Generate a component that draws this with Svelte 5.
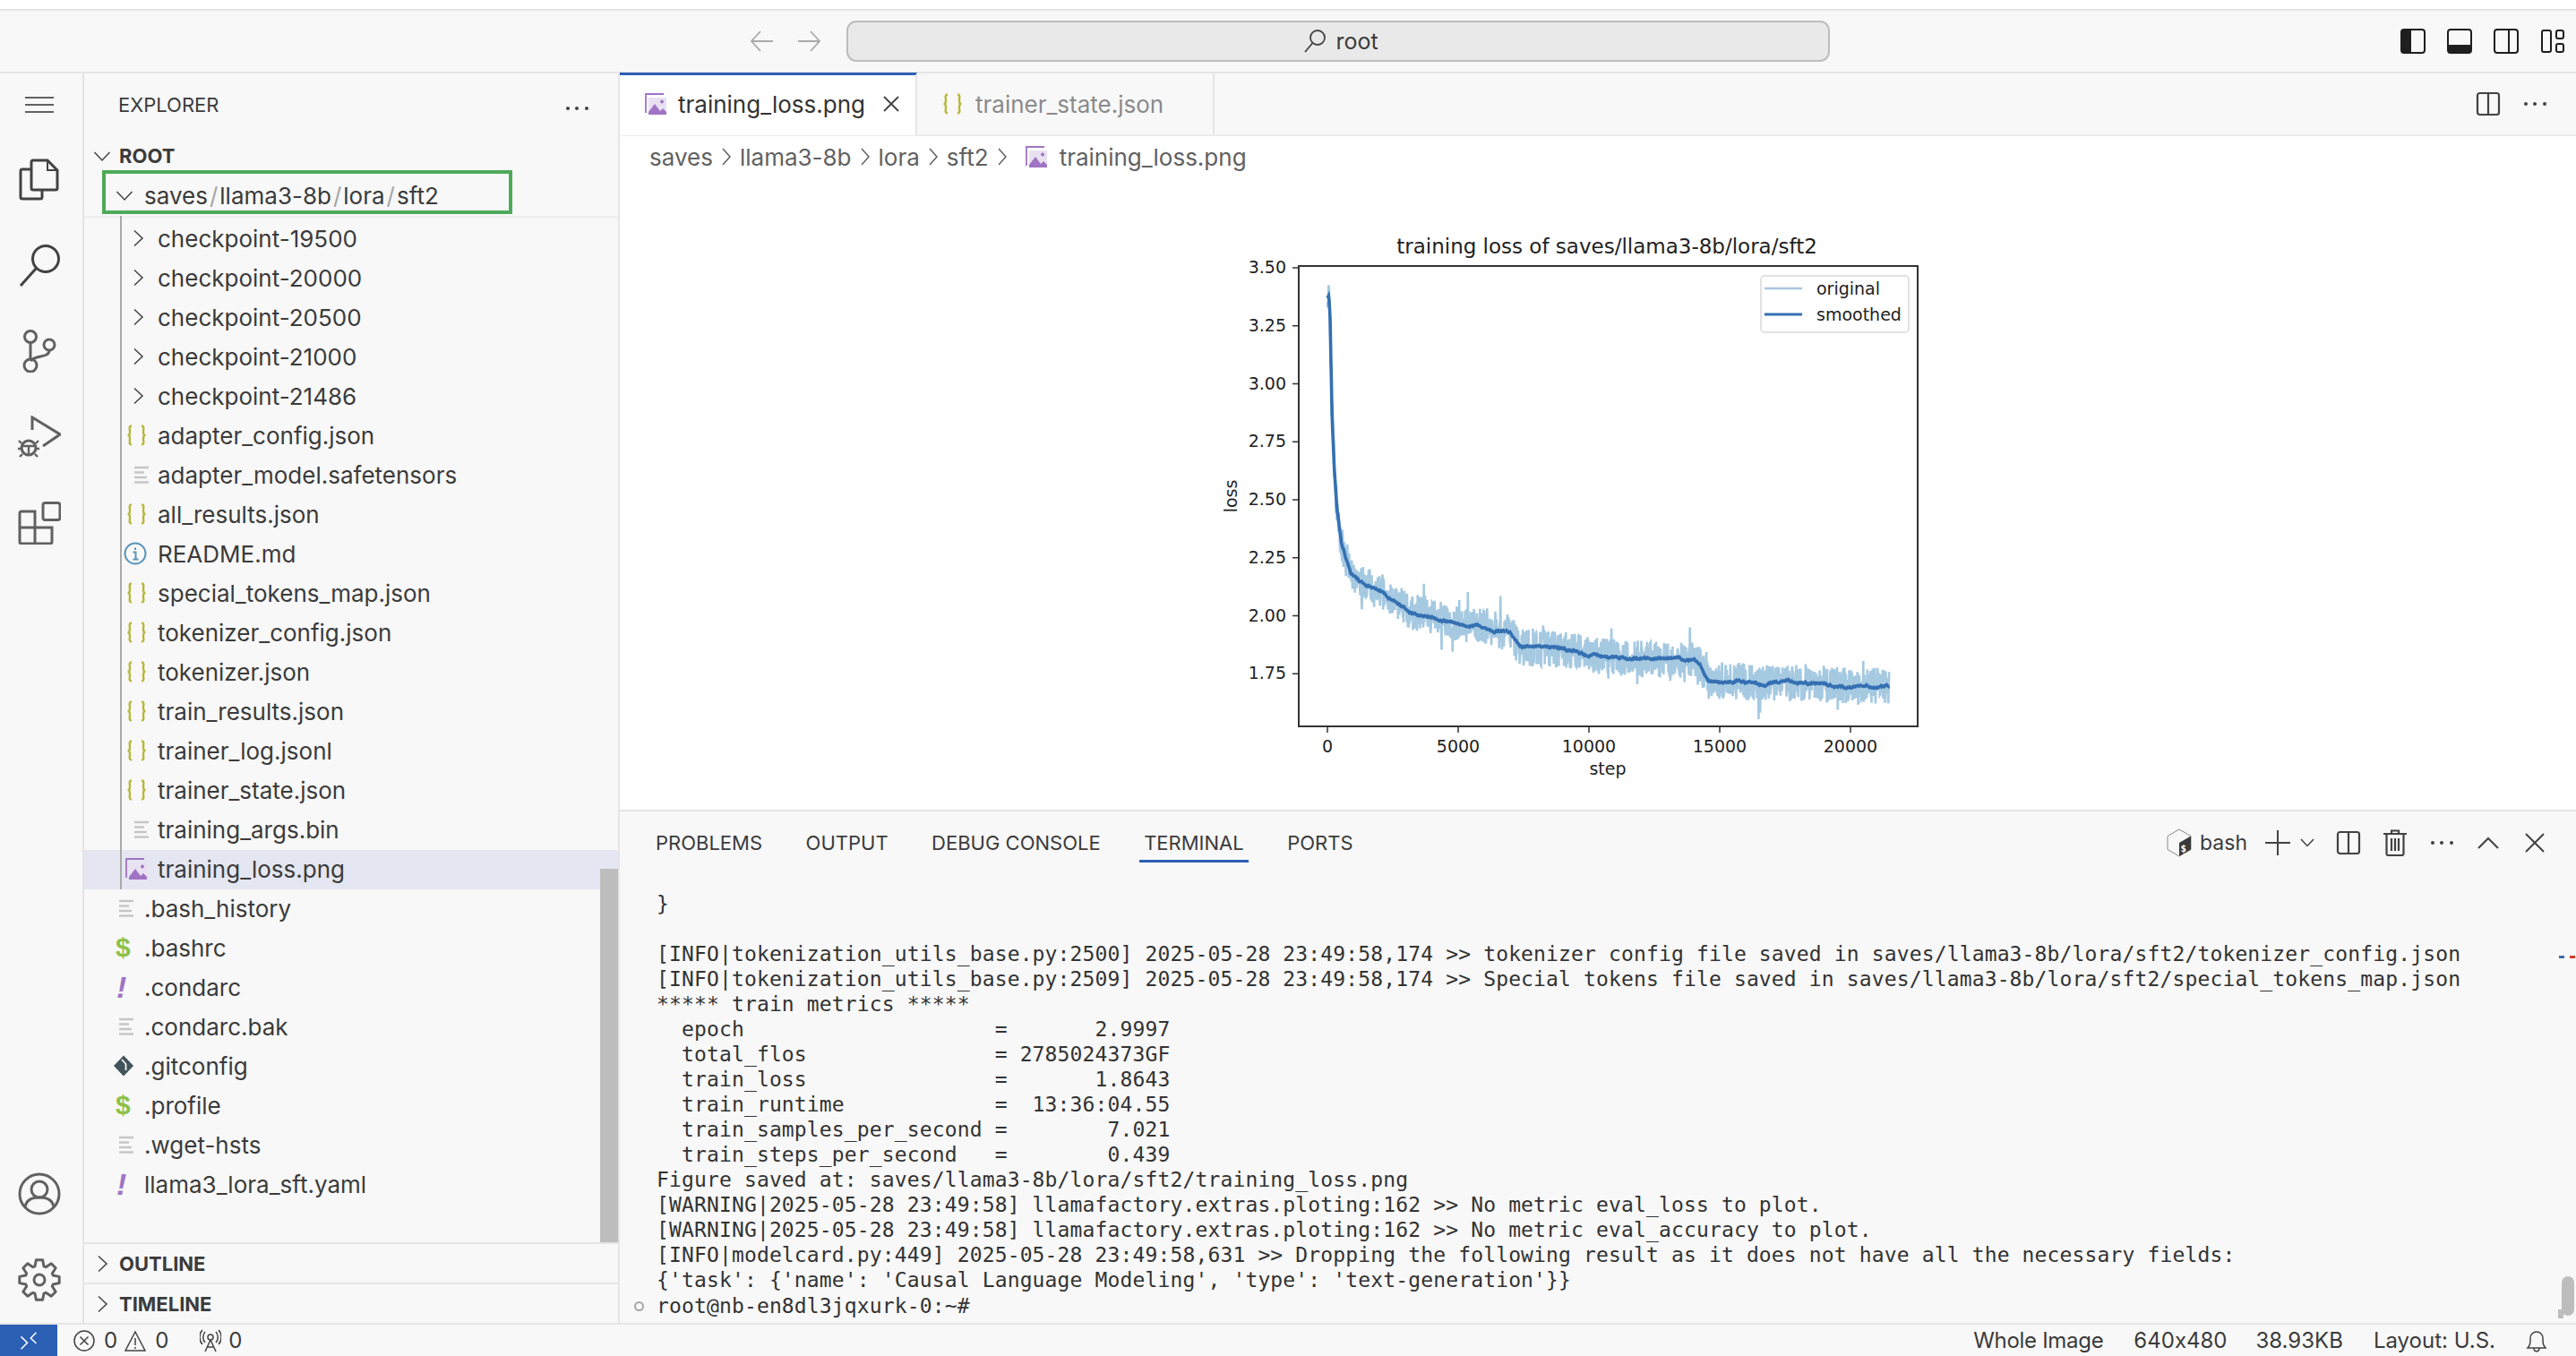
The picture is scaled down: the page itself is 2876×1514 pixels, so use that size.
<script lang="ts">
  const checkpoints = ['checkpoint-19500', 'checkpoint-20000', 'checkpoint-20500', 'checkpoint-21000', 'checkpoint-21486']
  const nestedFiles = [
    { name: 'adapter_config.json', kind: 'json' },
    { name: 'adapter_model.safetensors', kind: 'lines' },
    { name: 'all_results.json', kind: 'json' },
    { name: 'README.md', kind: 'info' },
    { name: 'special_tokens_map.json', kind: 'json' },
    { name: 'tokenizer_config.json', kind: 'json' },
    { name: 'tokenizer.json', kind: 'json' },
    { name: 'train_results.json', kind: 'json' },
    { name: 'trainer_log.jsonl', kind: 'json' },
    { name: 'trainer_state.json', kind: 'json' },
    { name: 'training_args.bin', kind: 'lines' },
    { name: 'training_loss.png', kind: 'image', selected: true },
  ]
  const rootFiles = [
    { name: '.bash_history', kind: 'lines' },
    { name: '.bashrc', kind: 'shell' },
    { name: '.condarc', kind: 'yaml' },
    { name: '.condarc.bak', kind: 'lines' },
    { name: '.gitconfig', kind: 'git' },
    { name: '.profile', kind: 'shell' },
    { name: '.wget-hsts', kind: 'lines' },
    { name: 'llama3_lora_sft.yaml', kind: 'yaml' },
  ]
  const panelTabs = ['PROBLEMS', 'OUTPUT', 'DEBUG CONSOLE', 'TERMINAL', 'PORTS']
  const terminalLines = [
    '}',
    '',
    '[INFO|tokenization_utils_base.py:2500] 2025-05-28 23:49:58,174 >> tokenizer config file saved in saves/llama3-8b/lora/sft2/tokenizer_config.json',
    '[INFO|tokenization_utils_base.py:2509] 2025-05-28 23:49:58,174 >> Special tokens file saved in saves/llama3-8b/lora/sft2/special_tokens_map.json',
    '***** train metrics *****',
    '  epoch                    =       2.9997',
    '  total_flos               = 2785024373GF',
    '  train_loss               =       1.8643',
    '  train_runtime            =  13:36:04.55',
    '  train_samples_per_second =        7.021',
    '  train_steps_per_second   =        0.439',
    'Figure saved at: saves/llama3-8b/lora/sft2/training_loss.png',
    '[WARNING|2025-05-28 23:49:58] llamafactory.extras.ploting:162 >> No metric eval_loss to plot.',
    '[WARNING|2025-05-28 23:49:58] llamafactory.extras.ploting:162 >> No metric eval_accuracy to plot.',
    "[INFO|modelcard.py:449] 2025-05-28 23:49:58,631 >> Dropping the following result as it does not have all the necessary fields:",
    "{'task': {'name': 'Causal Language Modeling', 'type': 'text-generation'}}",
  ]

  // chart lives in its own 820x640 svg, coordinates relative to that box
  const xOf = (step: number) => 142 + (step / 5000) * 146
  const yOf = (loss: number) => 59 + (3.5 - loss) * 259
  const yTicks = [3.5, 3.25, 3, 2.75, 2.5, 2.25, 2, 1.75]
  const xTicks = [0, 5000, 10000, 15000, 20000]

  const curve = [
    [0, 3.37], [50, 3.38], [100, 3.3], [180, 2.85], [270, 2.62], [360, 2.47], [540, 2.31], [900, 2.18], [1430, 2.13],
    [2000, 2.11], [2700, 2.05], [3200, 2.02], [4100, 1.99], [5000, 1.97], [5900, 1.95], [7000, 1.925],
    [7350, 1.86], [8400, 1.86], [9500, 1.845], [10000, 1.83], [11300, 1.82], [12500, 1.81], [14000, 1.81],
    [14250, 1.79], [14550, 1.72], [15800, 1.72], [16700, 1.71], [18500, 1.71], [19900, 1.695], [21486, 1.7],
  ]

  function baseLoss(step: number) {
    for (let i = 1; i < curve.length; i++) {
      if (step <= curve[i][0]) {
        const [x0, y0] = curve[i - 1]
        const [x1, y1] = curve[i]
        return y0 + ((step - x0) / (x1 - x0)) * (y1 - y0)
      }
    }
    return 1.7
  }

  let seed = 1234
  function rnd() {
    seed = (seed * 16807) % 2147483647
    return seed / 2147483647 - 0.5
  }

  let originalPts = ''
  let smoothPts = ''
  let drift = 0
  for (let s = 0; s <= 21486; s += 15) {
    const amp = s < 100 ? 0.1 : 0.16
    const spike = rnd() > 0.44 ? rnd() * 0.2 : 0
    originalPts += `${xOf(s).toFixed(1)},${yOf(baseLoss(s) + rnd() * amp + spike).toFixed(1)} `
    drift = drift * 0.96 + rnd() * 0.005
    smoothPts += `${xOf(s).toFixed(1)},${yOf(baseLoss(s) + (s > 600 ? drift : 0)).toFixed(1)} `
  }

  // settings gear outline
  let gearPath = ''
  for (let i = 0; i < 8; i++) {
    const a = (i * Math.PI) / 4 - Math.PI / 2
    const pt = (r: number, d: number) => `${(24 + r * Math.cos(a + d)).toFixed(1)} ${(24 + r * Math.sin(a + d)).toFixed(1)}`
    gearPath += `${i ? 'L' : 'M'}${pt(16, -0.32)} L${pt(22.5, -0.16)} L${pt(22.5, 0.16)} L${pt(16, 0.32)} `
  }
  gearPath += 'Z'
</script>

{#snippet fileIcon(kind: string)}
  <span class="file-icon">
    {#if kind === 'json'}
      <svg width="24" height="26" viewBox="0 0 24 26" fill="none" stroke="#b7b73b" stroke-width="2.4" style="margin-left:-3px">
        <path d="M6 2.500C2.500 2.500 4 6 4 9s-.5 4-2.500 4C3.500 13 4 14 4 17s-1.500 6.500 2 6.500" />
        <path d="M17 2.500c3.500 0 2 3.500 2 6.500s.5 4 2.500 4c-2 0-2.500 1-2.500 4s1.500 6.500-2 6.500" />
      </svg>
    {:else if kind === 'lines'}
      <svg width="24" height="24" viewBox="0 0 24 24" stroke="#c6c6c6" stroke-width="2.6">
        <path d="M6 4h16M6 9.500h11M6 15h14M6 20.500h16" />
      </svg>
    {:else if kind === 'info'}
      <svg width="26" height="26" viewBox="0 0 26 26" fill="none" stroke="#5a94bb" stroke-width="2" style="margin-left:-6px">
        <circle cx="13" cy="13" r="11.500" />
        <path d="M13 6.500v2.600M10.500 11.500H13.500V19M10.500 19.500h6" />
      </svg>
    {:else if kind === 'image'}
      <svg width="24" height="26" viewBox="0 0 24 26" style="margin-left:-4px">
        {@render pictureIcon()}
      </svg>
    {:else if kind === 'shell'}
      <span class="glyph shell">$</span>
    {:else if kind === 'yaml'}
      <span class="glyph yaml">!</span>
    {:else if kind === 'git'}
      <svg width="24" height="26" viewBox="0 0 24 26">
        <path d="M11 1.500 22 13 11 24.500 0 13z" fill="#41535b" />
        <path d="M9 6l4.500 5v7" stroke="#f8f8f8" stroke-width="1.800" fill="none" />
      </svg>
    {/if}
  </span>
{/snippet}

{#snippet pictureIcon()}
  <path d="M1 23V2h20" fill="none" stroke="#a074c4" stroke-width="1.800" />
  <path d="M4 6h20v19H4z" fill="#e9e1f2" />
  <path d="M4 25v-3l7-9 6 8 3-3 4 4v3z" fill="#a074c4" />
  <circle cx="19" cy="10.500" r="2" fill="#a074c4" />
{/snippet}

{#snippet chevronRight()}
  <svg class="chev" width="24" height="24" viewBox="0 0 24 24" fill="none" stroke="#424242" stroke-width="1.500">
    <path d="M8 3.500 17 12l-9 8.500" />
  </svg>
{/snippet}

{#snippet chevronDown()}
  <svg class="chev" width="24" height="24" viewBox="0 0 24 24" fill="none" stroke="#424242" stroke-width="1.500">
    <path d="M3.500 8 12 17l8.500-9" />
  </svg>
{/snippet}

{#snippet splitIcon()}
  <svg width="28" height="28" viewBox="0 0 28 28" fill="none" stroke="#424242" stroke-width="2.200">
    <rect x="2" y="2" width="24" height="24" rx="2.500" />
    <path d="M14 2v24" />
  </svg>
{/snippet}

{#snippet dotsIcon()}
  <svg width="28" height="8" viewBox="0 0 28 8" fill="#424242">
    <circle cx="4" cy="4" r="2" /><circle cx="14" cy="4" r="2" /><circle cx="25" cy="4" r="2" />
  </svg>
{/snippet}

<div class="window">
  <div class="top-strip"></div>

  <header class="titlebar">
    <div class="nav">
      <svg width="28" height="28" viewBox="0 0 28 28" fill="none" stroke="#a9a9a9" stroke-width="1.800">
        <path d="M26 14H2M12 3 2 14l10 11" />
      </svg>
      <svg width="28" height="28" viewBox="0 0 28 28" fill="none" stroke="#a9a9a9" stroke-width="1.800">
        <path d="M2 14h24M16 3l10 11-10 11" />
      </svg>
    </div>
    <div class="command">
      <svg width="26" height="28" viewBox="0 0 26 28" fill="none" stroke="#424242" stroke-width="1.800">
        <circle cx="16" cy="10" r="8" /><path d="M10.500 16 2 26" />
      </svg>
      <span>root</span>
    </div>
    <div class="layout-icons">
      <span class="slot">
        <svg width="28" height="28" viewBox="0 0 28 28">
          <rect x="1" y="1" width="26" height="26" rx="3" fill="none" stroke="#1e1e1e" stroke-width="2" />
          <path d="M1 4a3 3 0 0 1 3-3h8v26H4a3 3 0 0 1-3-3z" fill="#1e1e1e" />
        </svg>
      </span>
      <span class="slot">
        <svg width="28" height="28" viewBox="0 0 28 28">
          <rect x="1" y="1" width="26" height="26" rx="3" fill="none" stroke="#1e1e1e" stroke-width="2" />
          <path d="M1 18h26v6a3 3 0 0 1-3 3H4a3 3 0 0 1-3-3z" fill="#1e1e1e" />
        </svg>
      </span>
      <span class="slot">
        <svg width="28" height="28" viewBox="0 0 28 28" fill="none" stroke="#1e1e1e" stroke-width="2">
          <rect x="1" y="1" width="26" height="26" rx="3" /><path d="M17 1v26" />
        </svg>
      </span>
      <span class="slot">
        <svg width="26" height="26" viewBox="0 0 26 26" fill="none" stroke="#1e1e1e" stroke-width="2">
          <rect x="1" y="1" width="10" height="24" rx="2" />
          <rect x="17" y="1" width="8" height="9" rx="2" />
          <rect x="17" y="16" width="8" height="9" rx="2" />
        </svg>
      </span>
    </div>
  </header>

  <div class="workbench">
    <nav class="activity">
      <div class="act act-menu">
        <svg width="32" height="20" viewBox="0 0 32 20" stroke="#616161" stroke-width="2"><path d="M0 2h32M0 10h32M0 18h32" /></svg>
      </div>
      <div class="act">
        <svg width="48" height="48" viewBox="0 0 48 48" fill="none" stroke="#424242" stroke-width="3">
          <path d="M17 3h16l11 11v20a2 2 0 0 1-2 2H17a2 2 0 0 1-2-2V5a2 2 0 0 1 2-2z" />
          <path d="M33 3v11h11" stroke-width="2" />
          <path d="M15 13H5a2 2 0 0 0-2 2v29a2 2 0 0 0 2 2h20a2 2 0 0 0 2-2v-8" />
        </svg>
      </div>
      <div class="act">
        <svg width="48" height="48" viewBox="0 0 48 48" fill="none" stroke="#424242" stroke-width="3">
          <circle cx="31" cy="17" r="14.500" /><path d="M20 28 3 47" />
        </svg>
      </div>
      <div class="act">
        <svg width="48" height="48" viewBox="0 0 48 48" fill="none" stroke="#616161" stroke-width="3">
          <circle cx="14" cy="8" r="6.500" /><circle cx="35" cy="17" r="6" /><circle cx="14" cy="40" r="7" />
          <path d="M14 14.500V33M35 23c0 9-15 5-21 12" />
        </svg>
      </div>
      <div class="act">
        <svg width="48" height="48" viewBox="0 0 48 48" fill="none" stroke="#616161" stroke-width="3">
          <path d="M16 16V2l31 19-19 13" />
          <circle cx="12" cy="36" r="8" /><path d="M4 31l-3-3M20 31l3-3M3 37H0M21 37h3M5 43l-3 3M19 43l3 3M4 34h16M12 34v10" stroke-width="2.400" />
        </svg>
      </div>
      <div class="act">
        <svg width="48" height="48" viewBox="0 0 48 48" fill="none" stroke="#616161" stroke-width="3">
          <rect x="28" y="1.500" width="19" height="19" rx="2.500" />
          <path d="M19 29V11H4a2 2 0 0 0-2 2v32a2 2 0 0 0 2 2h32a2 2 0 0 0 2-2V29H2M19 29v18" />
        </svg>
      </div>
      <div class="act-spacer"></div>
      <div class="act">
        <svg width="48" height="48" viewBox="0 0 48 48" fill="none" stroke="#616161" stroke-width="3">
          <circle cx="24" cy="24" r="22" /><circle cx="24" cy="19" r="9" />
          <path d="M8 39c1-8 7-11 16-11s15 3 16 11" />
        </svg>
      </div>
      <div class="act">
        <svg width="48" height="48" viewBox="0 0 48 48" fill="none" stroke="#616161" stroke-width="3" stroke-linejoin="round">
          <path d={gearPath} /><circle cx="24" cy="24" r="6" />
        </svg>
      </div>
    </nav>

    <aside class="sidebar">
      <div class="side-head">
        <span>EXPLORER</span>
        <span class="side-more">{@render dotsIcon()}</span>
      </div>
      <div class="tree">
        <div class="row root-row">{@render chevronDown()}<span>ROOT</span></div>
        <div class="row level-1 sticky">
          {@render chevronDown()}
          <span class="compact">saves<i>/</i>llama3-8b<i>/</i>lora<i>/</i>sft2</span>
          <div class="callout"></div>
        </div>
        <div class="sticky-shadow"></div>
        <div class="nested">
          {#each checkpoints as name}
            <div class="row level-2">{@render chevronRight()}<span>{name}</span></div>
          {/each}
          {#each nestedFiles as f}
            <div class="row level-2" class:selected={f.selected}>{@render fileIcon(f.kind)}<span>{f.name}</span></div>
          {/each}
        </div>
        {#each rootFiles as f}
          <div class="row level-1">{@render fileIcon(f.kind)}<span>{f.name}</span></div>
        {/each}
        <div class="side-scroll"></div>
      </div>
      <div class="section">{@render chevronRight()}<span>OUTLINE</span></div>
      <div class="section">{@render chevronRight()}<span>TIMELINE</span></div>
    </aside>

    <main class="main">
      <div class="tabs">
        <div class="tab active">
          <svg width="24" height="26" viewBox="0 0 24 26">{@render pictureIcon()}</svg>
          <span>training_loss.png</span>
          <svg class="tab-close" width="18" height="18" viewBox="0 0 18 18" stroke="#424242" stroke-width="1.800"><path d="M1 1l16 16M17 1 1 17" /></svg>
        </div>
        <div class="tab second">
          <svg width="24" height="26" viewBox="0 0 24 26" fill="none" stroke="#b7b73b" stroke-width="2.400">
            <path d="M6 2.500C2.500 2.500 4 6 4 9s-.5 4-2.500 4C3.500 13 4 14 4 17s-1.500 6.500 2 6.500" />
            <path d="M17 2.500c3.500 0 2 3.500 2 6.500s.5 4 2.500 4c-2 0-2.500 1-2.500 4s1.500 6.500-2 6.500" />
          </svg>
          <span>trainer_state.json</span>
        </div>
        <div class="tab-actions">
          <span class="slot">{@render splitIcon()}</span>
          <span class="slot">{@render dotsIcon()}</span>
        </div>
      </div>

      <div class="crumbs">
        <span>saves</span>
        <svg width="12" height="22" viewBox="0 0 12 22" fill="none" stroke="#616161" stroke-width="1.500"><path d="M2 2l8 9-8 9" /></svg>
        <span>llama3-8b</span>
        <svg width="12" height="22" viewBox="0 0 12 22" fill="none" stroke="#616161" stroke-width="1.500"><path d="M2 2l8 9-8 9" /></svg>
        <span>lora</span>
        <svg width="12" height="22" viewBox="0 0 12 22" fill="none" stroke="#616161" stroke-width="1.500"><path d="M2 2l8 9-8 9" /></svg>
        <span>sft2</span>
        <svg width="12" height="22" viewBox="0 0 12 22" fill="none" stroke="#616161" stroke-width="1.500"><path d="M2 2l8 9-8 9" /></svg>
        <svg class="crumb-pic" width="24" height="26" viewBox="0 0 24 26">{@render pictureIcon()}</svg>
        <span>training_loss.png</span>
      </div>

      <div class="preview">
        <svg class="chart" width="820" height="640" viewBox="0 0 820 640">
          <text class="chart-title" x="454" y="43" text-anchor="middle">training loss of saves/llama3-8b/lora/sft2</text>
          <polyline points={originalPts} fill="none" stroke="#1f77b4" stroke-opacity="0.4" stroke-width="2.600" />
          <polyline points={smoothPts} fill="none" stroke="#3470b2" stroke-width="3.600" />
          <rect x="110" y="57" width="691" height="514" fill="none" stroke="#333" stroke-width="2" />
          {#each yTicks as t}
            <line x1="103" x2="110" y1={yOf(t)} y2={yOf(t)} stroke="#333" stroke-width="1.500" />
            <text class="chart-text" x="96" y={yOf(t) + 6} text-anchor="end">{t.toFixed(2)}</text>
          {/each}
          {#each xTicks as t}
            <line x1={xOf(t)} x2={xOf(t)} y1="571" y2="578" stroke="#333" stroke-width="1.500" />
            <text class="chart-text" x={xOf(t)} y="600" text-anchor="middle">{t}</text>
          {/each}
          <text class="chart-text" x="455" y="625" text-anchor="middle">step</text>
          <text class="chart-text" transform="translate(41 314) rotate(-90)" text-anchor="middle">loss</text>
          <rect x="626" y="68" width="165" height="63" rx="4" fill="#fff" fill-opacity="0.9" stroke="#d9d9d9" stroke-width="1.500" />
          <line x1="630" x2="672" y1="82" y2="82" stroke="#a9c6e2" stroke-width="2.500" />
          <line x1="630" x2="672" y1="111" y2="111" stroke="#3470b2" stroke-width="3" />
          <text class="chart-text" x="688" y="89">original</text>
          <text class="chart-text" x="688" y="118">smoothed</text>
        </svg>
      </div>

      <section class="panel">
        <div class="panel-head">
          {#each panelTabs as tab}
            <span class="panel-tab" class:current={tab === 'TERMINAL'}>{tab}</span>
          {/each}
          <div class="panel-actions">
            <svg class="bash-logo" width="28" height="32" viewBox="0 0 28 32">
              <path d="M14 1 27 8.500v15L14 31 1 23.500v-15z" fill="#f8f8f8" stroke="#8a8a8a" stroke-width="1" />
              <path d="M27 8.500v15L14 31V16z" fill="#3a3a3a" />
              <text x="15.500" y="26" class="bash-mark">$_</text>
            </svg>
            <span class="bash-name">bash</span>
            <svg class="plus" width="28" height="28" viewBox="0 0 28 28" stroke="#424242" stroke-width="2"><path d="M0 14h28M14 0v28" /></svg>
            <svg class="plus-more" width="16" height="10" viewBox="0 0 16 10" fill="none" stroke="#424242" stroke-width="1.500"><path d="M1 1l7 7.500L15 1" /></svg>
            <span class="slot first-slot">{@render splitIcon()}</span>
            <span class="slot">
              <svg width="26" height="30" viewBox="0 0 26 30" fill="none" stroke="#424242" stroke-width="2.200">
                <path d="M0 5h26M9 5V1.500h8V5M3.500 5v22a2 2 0 0 0 2 2h15a2 2 0 0 0 2-2V5M9 10v14M13 10v14M17 10v14" />
              </svg>
            </span>
            <span class="slot">{@render dotsIcon()}</span>
            <span class="slot">
              <svg width="24" height="14" viewBox="0 0 24 14" fill="none" stroke="#424242" stroke-width="2"><path d="M1 13 12 2l11 11" /></svg>
            </span>
            <span class="slot">
              <svg width="22" height="22" viewBox="0 0 22 22" stroke="#424242" stroke-width="2"><path d="M1 1l20 20M21 1 1 21" /></svg>
            </span>
          </div>
        </div>
        <div class="terminal">
          {#each terminalLines as line}
            <div class="term-line">{line}</div>
          {/each}
          <div class="term-line prompt"><span class="prompt-dot"></span>root@nb-en8dl3jqxurk-0:~#</div>
          <span class="ruler ruler-blue"></span>
          <span class="ruler ruler-red"></span>
          <span class="term-notch"></span>
          <span class="term-scroll"></span>
        </div>
      </section>
    </main>
  </div>

  <footer class="status">
    <span class="remote">
      <svg width="20" height="22" viewBox="0 0 26 28" fill="none" stroke="#fff" stroke-width="2">
        <path d="M2 8l9 9-9 9M24 2l-8 8 8 8" />
      </svg>
    </span>
    <svg class="st-err" width="24" height="24" viewBox="0 0 24 24" fill="none" stroke="#424242" stroke-width="1.500">
      <circle cx="12" cy="12" r="11" /><path d="M7.500 7.500l9 9M16.500 7.500l-9 9" />
    </svg>
    <span class="st-count">0</span>
    <svg class="st-warn" width="24" height="24" viewBox="0 0 24 24" fill="none" stroke="#424242" stroke-width="1.500">
      <path d="M12 2 23 23H1zM12 9v8M12 19v2" />
    </svg>
    <span class="st-count">0</span>
    <svg class="st-radio" width="24" height="26" viewBox="0 0 24 26" fill="none" stroke="#424242" stroke-width="1.500">
      <circle cx="12" cy="9" r="3" /><path d="M12 12 6 25M12 12l6 13M8 20h8M6 3c-3 3-3 9 0 12M18 3c3 3 3 9 0 12M3 1c-4 4-4 12 0 16M21 1c4 4 4 12 0 16" />
    </svg>
    <span class="st-count last">0</span>
    <div class="status-right">
      <span class="st-mode">Whole Image</span>
      <span class="st-size">640x480</span>
      <span>38.93KB</span>
      <span>Layout: U.S.</span>
      <svg width="24" height="28" viewBox="0 0 24 28" fill="none" stroke="#424242" stroke-width="1.500">
        <path d="M2 22c3-3 3-6 3-11a7 7 0 0 1 14 0c0 5 0 8 3 11zM9 22c0 5 6 5 6 0" />
      </svg>
    </div>
  </footer>
</div>

<style>
  :global(body) {
    margin: 0;
    background: #fff;
  }

  .window {
    width: 2876px;
    height: 1514px;
    display: flex;
    flex-direction: column;
    overflow: hidden;
    font-family: Inter, 'Liberation Sans', sans-serif;
    font-feature-settings: 'calt' 0;
    font-size: 26px;
    color: #3b3b3b;
    background: #f8f8f8;
  }

  .top-strip {
    height: 10px;
    background: #fff;
    border-bottom: 2px solid #e5e5e5;
    flex: none;
  }

  .titlebar {
    height: 68px;
    flex: none;
    border-bottom: 2px solid #e5e5e5;
    display: flex;
    align-items: center;
    position: relative;
  }

  .nav {
    display: flex;
    gap: 24px;
    margin-left: 837px;
  }

  .command {
    width: 1098px;
    height: 46px;
    box-sizing: border-box;
    margin-left: 28px;
    padding-left: 6px;
    background: #e9e9e9;
    border: 2px solid #bdbdbd;
    border-radius: 11px;
    display: flex;
    align-items: center;
    justify-content: center;
    gap: 10px;
    font-size: 25px;
  }

  .layout-icons {
    margin-left: auto;
    display: flex;
    align-items: center;
  }

  .slot {
    width: 52px;
    display: flex;
    align-items: center;
    justify-content: center;
  }

  .workbench {
    flex: 1;
    min-height: 0;
    display: flex;
  }

  .activity {
    width: 92px;
    flex: none;
    border-right: 2px solid #e5e5e5;
    display: flex;
    flex-direction: column;
  }

  .act {
    height: 96px;
    flex: none;
    display: flex;
    align-items: center;
    justify-content: center;
    padding-right: 4px;
  }

  .act-menu {
    height: 70px;
  }

  .act-spacer {
    flex: 1;
  }

  .sidebar {
    width: 596px;
    flex: none;
    border-right: 2px solid #e5e5e5;
    display: flex;
    flex-direction: column;
  }

  .side-head {
    height: 70px;
    flex: none;
    padding: 0 32px 0 38px;
    display: flex;
    align-items: center;
    justify-content: space-between;
    font-size: 22px;
  }

  .tree {
    flex: 1;
    min-height: 0;
    position: relative;
    overflow: hidden;
  }

  .row {
    height: 44px;
    box-sizing: border-box;
    padding-bottom: 2px;
    display: flex;
    align-items: center;
    white-space: nowrap;
    position: relative;
  }

  .root-row {
    height: 45px;
    padding-left: 8px;
    gap: 7px;
    font-weight: 700;
    font-size: 22px;
  }

  .level-1 {
    padding-left: 33px;
    gap: 10px;
  }

  .level-2 {
    padding-left: 50px;
    gap: 8px;
  }

  .chev,
  .file-icon {
    width: 24px;
    height: 26px;
    flex: none;
    display: flex;
    align-items: center;
    justify-content: flex-start;
  }

  .level-2 .chev {
    margin: 0 2px 0 -2px;
  }

  .compact i {
    font-style: normal;
    color: #a5a5a5;
    margin: 0 2px;
  }

  .callout {
    position: absolute;
    left: 20px;
    top: -7px;
    width: 458px;
    height: 49px;
    box-sizing: border-box;
    border: 4px solid #4eaa58;
  }

  .sticky-shadow {
    height: 4px;
    background: linear-gradient(#ececec, #f8f8f8);
  }

  .nested {
    position: relative;
  }

  .nested::before {
    content: '';
    position: absolute;
    left: 40px;
    top: -4px;
    bottom: 0;
    width: 2px;
    background: #a9a9a9;
    z-index: 1;
  }

  .selected {
    background: #e4e6f1;
  }

  .glyph {
    font-family: 'Liberation Sans', sans-serif;
    font-weight: 700;
    font-size: 30px;
    line-height: 26px;
    padding-left: 2px;
  }

  .shell {
    color: #8dc149;
  }

  .yaml {
    color: #a074c4;
    font-style: italic;
    font-size: 34px;
    padding-left: 3px;
  }

  .side-scroll {
    position: absolute;
    right: 0;
    top: 818px;
    bottom: 0;
    width: 20px;
    background: #bdbdbd;
    z-index: 2;
  }

  .section {
    height: 43px;
    flex: none;
    border-top: 2px solid #e5e5e5;
    display: flex;
    align-items: center;
    padding-left: 8px;
    gap: 7px;
    font-weight: 700;
    font-size: 22px;
  }

  .main {
    flex: 1;
    min-width: 0;
    display: flex;
    flex-direction: column;
  }

  .tabs {
    height: 68px;
    flex: none;
    display: flex;
    border-bottom: 2px solid #ececec;
  }

  .tab {
    width: 332px;
    box-sizing: border-box;
    border-right: 2px solid #e5e5e5;
    display: flex;
    align-items: center;
    padding-left: 28px;
    gap: 13px;
    color: #8a8a8a;
    height: 68px;
  }

  .tab.second {
    gap: 13px;
  }

  .tab.active {
    background: #fff;
    color: #333;
    border-top: 3px solid #2a5fb4;
    padding-bottom: 3px;
    height: 70px;
    margin-top: -1px;
    margin-bottom: -1px;
    z-index: 1;
  }

  .tab-close {
    margin-left: 7px;
  }

  .tab-actions {
    margin-left: auto;
    padding-right: 20px;
    display: flex;
    align-items: center;
  }

  .crumbs {
    height: 46px;
    flex: none;
    background: #fff;
    padding-left: 33px;
    display: flex;
    align-items: center;
    gap: 9px;
    color: #616161;
  }

  .crumb-pic {
    margin: 0 5px 0 11px;
  }

  .preview {
    flex: 1;
    min-height: 0;
    background: #fff;
    padding: 42px 0 0 648px;
    overflow: hidden;
  }

  .chart {
    display: block;
  }

  .chart-title {
    font-family: 'DejaVu Sans', sans-serif;
    font-size: 23px;
    fill: #222;
  }

  .chart-text {
    font-family: 'DejaVu Sans', sans-serif;
    font-size: 19px;
    fill: #222;
  }

  .panel {
    height: 573px;
    flex: none;
    box-sizing: border-box;
    border-top: 2px solid #e5e5e5;
    display: flex;
    flex-direction: column;
  }

  .panel-head {
    height: 70px;
    flex: none;
    display: flex;
    align-items: center;
    padding-left: 40px;
    gap: 48.500px;
    font-size: 22px;
  }

  .panel-tab {
    position: relative;
  }

  .panel-tab.current::after {
    content: '';
    position: absolute;
    left: -5px;
    right: -5px;
    bottom: -9px;
    height: 3px;
    background: #2a5fb4;
  }

  .panel-actions {
    margin-left: auto;
    padding-right: 20px;
    display: flex;
    align-items: center;
    font-size: 23px;
  }

  .bash-logo {
    margin-right: 9px;
  }

  .bash-mark {
    font-family: 'DejaVu Sans Mono', monospace;
    font-size: 11px;
    font-weight: 700;
    fill: #fff;
  }

  .plus {
    margin-left: 20px;
  }

  .plus-more {
    margin-left: 11px;
  }

  .first-slot {
    margin-left: 12px;
  }

  .terminal {
    flex: 1;
    min-height: 0;
    position: relative;
    padding: 19px 0 0 41px;
    font-family: 'DejaVu Sans Mono', monospace;
    font-size: 23px;
    letter-spacing: 0.14px;
    line-height: 28px;
    color: #333;
  }

  .term-line {
    height: 28px;
    white-space: pre;
  }

  .prompt {
    position: relative;
    top: 1px;
  }

  .prompt-dot {
    position: absolute;
    left: -25px;
    top: 9px;
    width: 11px;
    height: 11px;
    box-sizing: border-box;
    border: 2px solid #a5a5a5;
    border-radius: 50%;
  }

  .ruler {
    position: absolute;
    top: 91px;
    height: 3px;
    width: 6px;
  }

  .ruler-blue {
    right: 13px;
    background: #3a6ea5;
  }

  .ruler-red {
    right: 1px;
    background: #d13a2a;
  }

  .term-scroll {
    position: absolute;
    right: 2px;
    top: 449px;
    width: 14px;
    height: 44px;
    border-radius: 7px;
    background: #bdbdbd;
  }

  .term-notch {
    position: absolute;
    right: 14px;
    top: 486px;
    width: 6px;
    height: 10px;
    background: #bdbdbd;
  }

  .status {
    height: 35px;
    flex: none;
    border-top: 2px solid #e5e5e5;
    display: flex;
    align-items: center;
    font-size: 24px;
  }

  .remote {
    width: 64px;
    height: 100%;
    background: #2a5fb4;
    display: flex;
    align-items: center;
    justify-content: center;
  }

  .st-err {
    margin-left: 18px;
  }

  .st-count {
    margin-left: 10px;
  }

  .st-warn {
    margin-left: 8px;
  }

  .st-radio {
    margin-left: 35px;
  }

  .st-count.last {
    margin-left: 8px;
  }

  .st-mode {
    letter-spacing: -0.3px;
  }

  .st-size {
    margin-right: -2px;
  }

  .status-right {
    margin-left: auto;
    padding-right: 32px;
    display: flex;
    align-items: center;
    gap: 34px;
  }
</style>
